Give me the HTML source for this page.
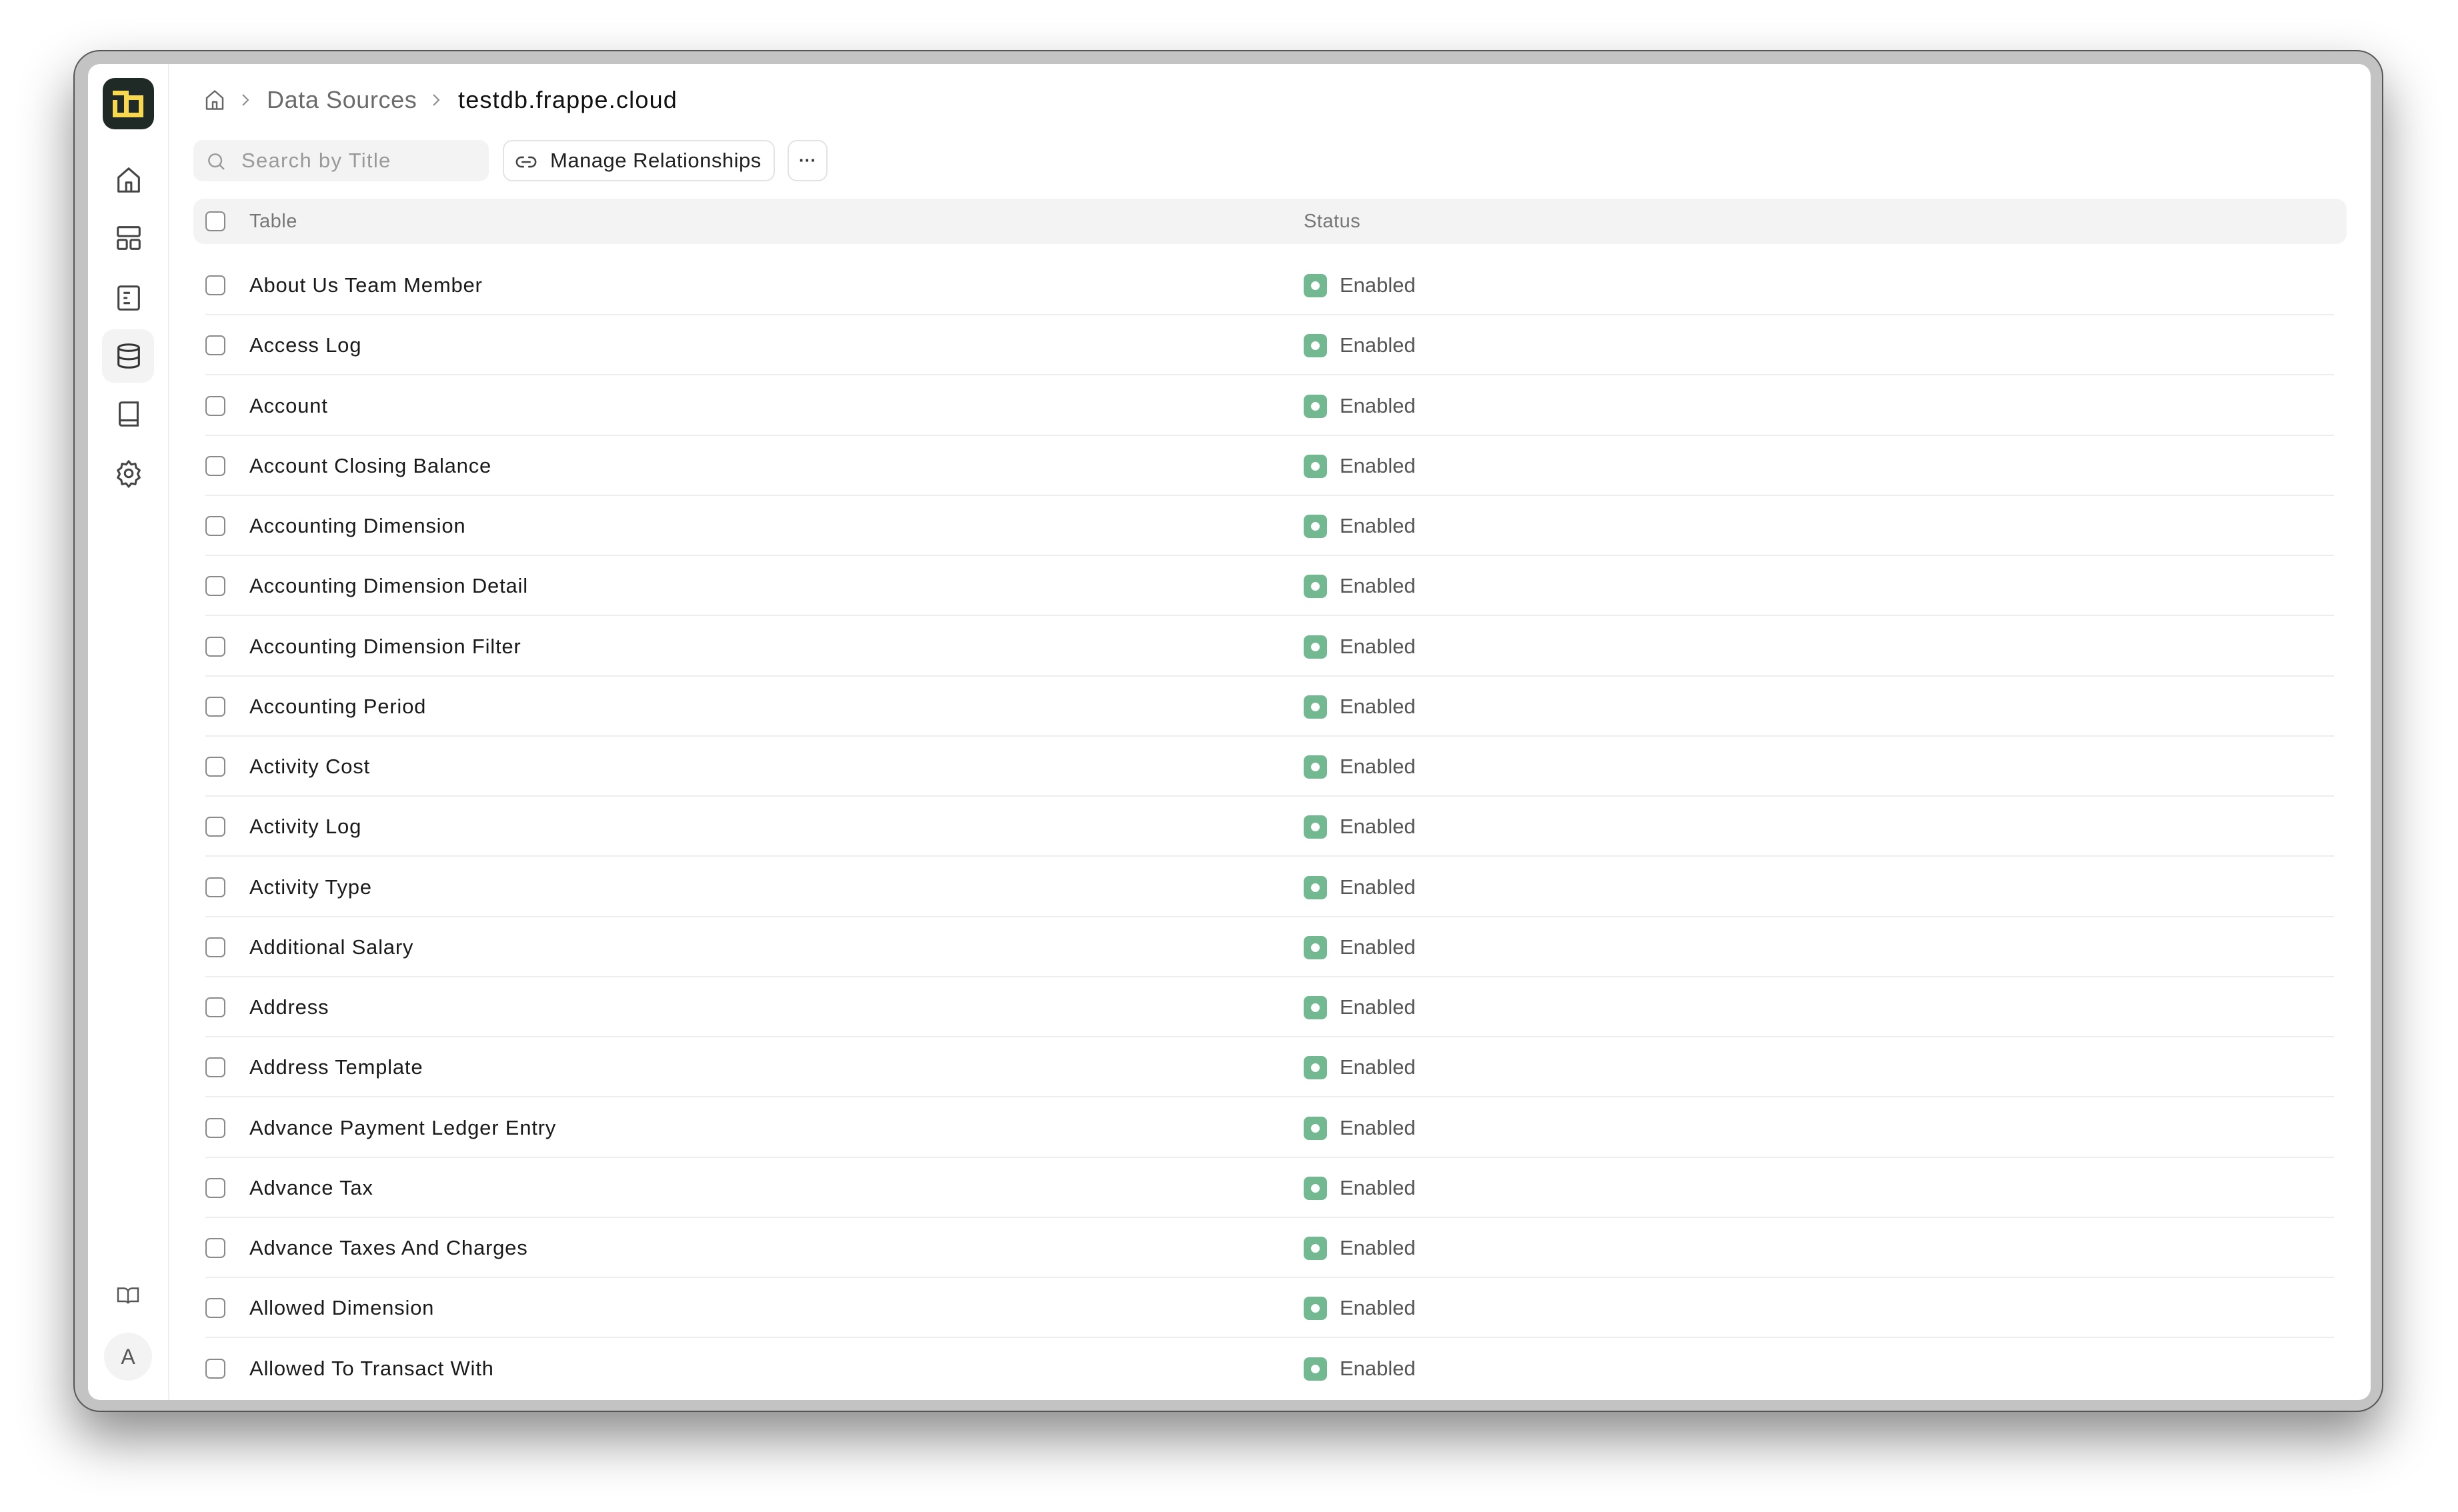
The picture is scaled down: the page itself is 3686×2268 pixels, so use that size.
<!DOCTYPE html>
<html><head><meta charset="utf-8"><style>
*{margin:0;padding:0;box-sizing:border-box}
body{width:3686px;height:2268px;background:#fff;font-family:"Liberation Sans",sans-serif;position:relative;overflow:hidden}
.bezel{position:absolute;left:110px;top:75px;width:3464px;height:2043px;border-radius:40px;background:#c3c3c3;border:2px solid #555;box-shadow:0 40px 80px rgba(0,0,0,.45)}
.win{position:absolute;left:132px;top:96px;width:3423px;height:2004px;background:#fff;border-radius:18px;overflow:hidden}
.side{position:absolute;left:0;top:0;width:122px;height:100%;border-right:2px solid #eee}
.ico{position:absolute;left:38px;width:46px;height:46px}
.txt{position:absolute;white-space:nowrap}
.row{position:absolute;left:176px;width:3192px;height:90px;border-bottom:2px solid #ededed}
.cb{position:absolute;left:176px;width:30px;height:30px;border:2px solid #8a8a8a;border-radius:7px;background:#fff}
.name{position:absolute;left:242px;font-size:31px;color:#1a1a1a;letter-spacing:0.8px}
.badge{position:absolute;left:1823px;width:35px;height:35px;background:#72b890;border-radius:8px}
.badge:after{content:"";position:absolute;left:11px;top:11px;width:13px;height:13px;border-radius:50%;background:#fff}
.en{position:absolute;left:1877px;font-size:31px;color:#555}
</style></head><body>
<div class="bezel"></div>
<div class="win">
 <div class="side">
  <svg style="position:absolute;left:22px;top:21px" width="77" height="77" viewBox="0 0 77 77"><rect width="77" height="77" rx="18" fill="#1f2a26"/><g fill="#f7d84f"><rect x="15" y="19" width="24" height="7"/><rect x="32" y="19" width="7" height="40"/><rect x="32" y="26" width="29" height="7"/><rect x="54" y="26" width="7" height="33"/><rect x="15" y="52" width="46" height="7"/><rect x="15" y="33" width="7" height="26"/></g></svg>
  <svg class="ico" style="top:151px" viewBox="0 0 24 24" fill="none" stroke="#444" stroke-width="1.6" stroke-linejoin="round"><path d="M4 10L12 3l8 7v11H4z"/><path d="M10 21v-7h4v7"/></svg>
  <svg class="ico" style="top:238px" viewBox="0 0 24 24" fill="none" stroke="#444" stroke-width="1.6"><rect x="3.5" y="3.5" width="17" height="7" rx="1"/><rect x="3.5" y="13.5" width="7" height="7" rx="1"/><rect x="13.5" y="13.5" width="7" height="7" rx="1"/></svg>
  <svg class="ico" style="top:328px" viewBox="0 0 24 24" fill="none" stroke="#444" stroke-width="1.6"><rect x="4" y="3" width="16" height="18" rx="1.5"/><path d="M8 8h5M8 12h3M8 16h5"/></svg>
  <div style="position:absolute;left:21px;top:398px;width:78px;height:80px;background:#f3f3f3;border-radius:18px"></div>
  <svg class="ico" style="top:415px" viewBox="0 0 24 24" fill="none" stroke="#333" stroke-width="1.6"><ellipse cx="12" cy="5.5" rx="8" ry="2.5"/><path d="M4 5.5v13c0 1.4 3.6 2.5 8 2.5s8-1.1 8-2.5v-13M4 12c0 1.4 3.6 2.5 8 2.5s8-1.1 8-2.5"/></svg>
  <svg class="ico" style="top:502px" viewBox="0 0 24 24" fill="none" stroke="#444" stroke-width="1.6"><path d="M5 4.5A1.5 1.5 0 0 1 6.5 3H19v18H6.5A1.5 1.5 0 0 1 5 19.5zM5 17h14"/></svg>
  <svg class="ico" style="top:591px" viewBox="0 0 24 24" fill="none" stroke="#444" stroke-width="1.6" stroke-linejoin="round"><path d="M12 2.5l2 2.6 3.2-.6.6 3.2 2.7 1.9-1.5 2.9 1.5 2.9-2.7 1.9-.6 3.2-3.2-.6-2 2.6-2-2.6-3.2.6-.6-3.2-2.7-1.9 1.5-2.9-1.5-2.9 2.7-1.9.6-3.2 3.2.6z"/><circle cx="12" cy="12" r="3"/></svg>
  <svg style="position:absolute;left:42px;top:1829px" width="36" height="36" viewBox="0 0 24 24" fill="none" stroke="#555" stroke-width="1.6"><path d="M2 5h6a4 4 0 0 1 4 3v12a3 3 0 0 0-3-2H2zM22 5h-6a4 4 0 0 0-4 3v12a3 3 0 0 1 3-2h7z"/></svg>
  <div style="position:absolute;left:24px;top:1903px;width:72px;height:72px;border-radius:50%;background:#f3f3f3;font-size:32px;color:#555;text-align:center;line-height:72px">A</div>
 </div>
 <svg style="position:absolute;left:172px;top:36px" width="36" height="36" viewBox="0 0 24 24" fill="none" stroke="#666" stroke-width="1.6" stroke-linejoin="round"><path d="M4 10L12 3l8 7v11H4z"/><path d="M10 21v-7h4v7"/></svg>
 <svg style="position:absolute;left:226px;top:42px" width="20" height="24" viewBox="0 0 10 12" fill="none" stroke="#888" stroke-width="1"><path d="M3 2l4 4-4 4"/></svg>
 <div class="txt" style="left:268px;top:33px;font-size:36px;color:#6b6b6b;letter-spacing:0.6px">Data Sources</div>
 <svg style="position:absolute;left:512px;top:42px" width="20" height="24" viewBox="0 0 10 12" fill="none" stroke="#888" stroke-width="1"><path d="M3 2l4 4-4 4"/></svg>
 <div class="txt" style="left:555px;top:33px;font-size:36px;color:#111;letter-spacing:1.2px">testdb.frappe.cloud</div>
 <div style="position:absolute;left:158px;top:114px;width:443px;height:62px;background:#f3f3f3;border-radius:14px"></div>
 <svg style="position:absolute;left:176px;top:130px" width="32" height="32" viewBox="0 0 24 24" fill="none" stroke="#999" stroke-width="1.8"><circle cx="11" cy="11" r="7"/><path d="M16 16l5 5"/></svg>
 <div class="txt" style="left:230px;top:127px;font-size:31px;color:#999;letter-spacing:1.3px">Search by Title</div>
 <div style="position:absolute;left:622px;top:114px;width:408px;height:62px;border:2px solid #e3e3e3;border-radius:14px;background:#fff"></div>
 <svg style="position:absolute;left:640px;top:130px" width="34" height="34" viewBox="0 0 24 24" fill="none" stroke="#444" stroke-width="1.8" stroke-linecap="round"><path d="M9 17H7a5 5 0 0 1 0-10h2M15 7h2a5 5 0 0 1 0 10h-2M8 12h8"/></svg>
 <div class="txt" style="left:693px;top:127px;font-size:31px;color:#222;letter-spacing:0.5px">Manage Relationships</div>
 <div style="position:absolute;left:1049px;top:114px;width:60px;height:62px;border:2px solid #e3e3e3;border-radius:14px;background:#fff;text-align:center;font-size:26px;line-height:56px;color:#333;font-weight:bold">···</div>
 <div style="position:absolute;left:158px;top:202px;width:3229px;height:68px;background:#f3f3f3;border-radius:16px"></div>
 <div class="cb" style="top:221px"></div>
 <div class="txt" style="left:242px;top:220px;font-size:29px;color:#777;letter-spacing:0.5px">Table</div>
 <div class="txt" style="left:1823px;top:220px;font-size:29px;color:#777;letter-spacing:0.5px">Status</div>
 <div id="rows"></div>
</div>
<script>
var n=["About Us Team Member","Access Log","Account","Account Closing Balance","Accounting Dimension","Accounting Dimension Detail","Accounting Dimension Filter","Accounting Period","Activity Cost","Activity Log","Activity Type","Additional Salary","Address","Address Template","Advance Payment Ledger Entry","Advance Tax","Advance Taxes And Charges","Allowed Dimension","Allowed To Transact With"];
var h="";
for(var i=0;i<n.length;i++){var c=332+i*90.25;
h+='<div class="row" style="top:'+(c-45)+'px'+(i==n.length-1?';border:none':'')+'"></div><div class="cb" style="top:'+(c-15)+'px"></div><div class="name txt" style="top:'+(c-18)+'px">'+n[i]+'</div><div class="badge" style="top:'+(c-17)+'px"></div><div class="en txt" style="top:'+(c-18)+'px">Enabled</div>';}
document.getElementById("rows").innerHTML=h;
</script>
</body></html>
